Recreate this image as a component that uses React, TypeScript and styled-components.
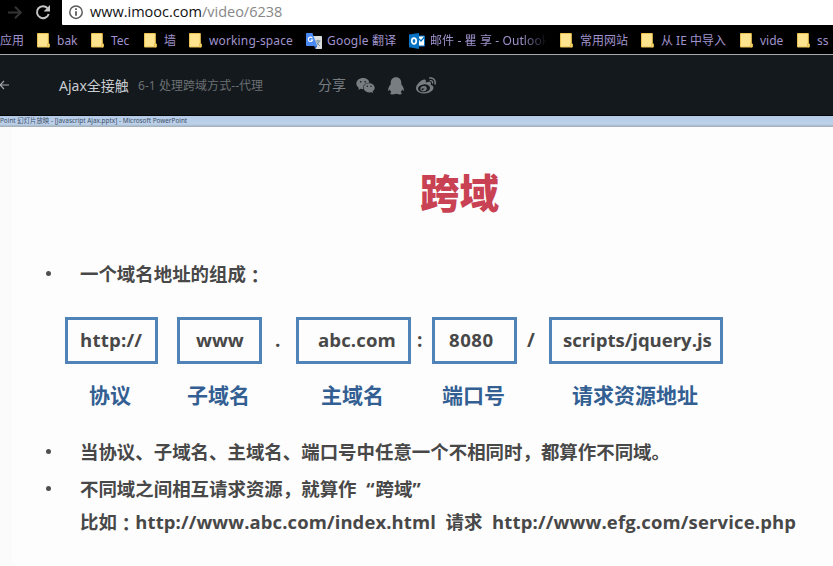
import React from 'react';
import styled, { createGlobalStyle } from 'styled-components';
import { AiFillWechat } from 'react-icons/ai';
import { FaWeibo } from 'react-icons/fa';

const Global = createGlobalStyle`
  * { box-sizing: border-box; }
  body { margin: 0; background: #000; overflow: hidden; }
`;

const Page = styled.div`
  width: 833px;
  height: 566px;
  overflow: hidden;
  display: flex;
  flex-direction: column;
  background: #000;
  font-family: 'Noto Sans', 'Noto Sans CJK SC', sans-serif;
  white-space: pre;
`;

const Toolbar = styled.div`
  height: 25px;
  flex: none;
  display: flex;
`;

const NavButtons = styled.div`
  width: 62px;
  display: flex;
  svg { display: block; }
`;

const AddressBar = styled.div`
  flex: 1;
  display: flex;
  background: #fff;
  padding-left: 6px;
  border-radius: 0 0 0 1px;
`;

const Url = styled.div`
  margin-left: 6px;
  font: 14.5px/24px 'Open Sans', sans-serif;
  color: #878787;
  span { color: #111; }
`;

const Bookmarks = styled.div`
  height: 29px;
  flex: none;
  display: grid;
  grid-template-columns: 37px 54px 53px 45px 117px 103px 151px 81px 99px 57px 60px;
  align-items: center;
  padding-top: 2px;
`;

const Bookmark = styled.div<{ $gap?: number; $spacing?: number; $fade?: boolean }>`
  display: flex;
  align-items: center;
  gap: ${(p) => p.$gap ?? 7}px;
  font-size: 12px;
  line-height: 18px;
  color: #a093cd;
  letter-spacing: ${(p) => p.$spacing ?? 0}px;
  overflow: hidden;
  svg { flex: none; }
  span {
    ${(p) => p.$fade && `
      width: 117px;
      overflow: hidden;
      mask-image: linear-gradient(90deg, #000 92px, transparent 117px);
    `}
  }
`;

const CourseBar = styled.div`
  height: 62px;
  flex: none;
  display: flex;
  align-items: center;
  background: #14191d;
  border-top: 1px solid #a8a8a8;
  border-bottom: 1px solid #040608;
  svg { flex: none; }
`;

const CourseTitle = styled.div`
  width: 79px;
  margin: -1px 0 0 49px;
  font-size: 14px;
  color: #c9cdd1;
`;

const Lesson = styled.div`
  width: 180px;
  font-size: 12px;
  letter-spacing: 0.05px;
  color: #6b7074;
`;

const Share = styled.div`
  display: flex;
  align-items: center;
  color: #787d82;
  font-size: 14px;
  span { width: 37px; margin-top: -2px; }
  svg + svg { margin: 1px 0 0 11px; }
`;

const WindowTitle = styled.div`
  height: 11px;
  flex: none;
  background: linear-gradient(#b4cae6, #bdd2ea 80%, #a9b9c8);
  border-bottom: 1px solid #a6b3bf;
  font-size: 6.4px;
  line-height: 9px;
  color: #3e4f68;
`;

const Slide = styled.main`
  flex: 1;
  border-left: 12px solid #fbfbfb;
  background: #fdfdfd;
  display: flex;
  flex-direction: column;
  color: #484848;
  font-family: 'Open Sans', 'Noto Sans CJK SC', sans-serif;
  font-weight: 700;
`;

const Heading = styled.h1`
  margin: 38px 0 0 408px;
  height: 56px;
  font-size: 39.5px;
  line-height: 56px;
  font-weight: 900;
  color: #c84253;
`;

const Point = styled.div<{ $top: number }>`
  margin: ${(p) => p.$top}px 0 0 34px;
  height: 28px;
  display: grid;
  grid-template-columns: 34px 1fr;
  font-size: 18.46px;
  line-height: 28px;
`;

const Dot = styled.i`
  width: 5px;
  height: 5px;
  margin-top: 11px;
  border-radius: 50%;
  background: #505050;
`;

const Colon = styled.span`
  font-family: 'Noto Sans CJK TC', sans-serif;
  display: inline-block;
  height: 28px;
  vertical-align: top;
  padding-top: 1px;
`;

const Latin = styled.span<{ $spacing: number }>`
  letter-spacing: ${(p) => p.$spacing}px;
`;

const OpenQuote = styled.span`
  display: inline-block;
  width: 19px;
  padding-right: 1px;
  text-align: right;
`;

const UrlParts = styled.div`
  margin: 29px 0 0 53px;
  display: grid;
  grid-template-columns: 93px 19px 85px 34px 115px 21px 85px 32px 174px;
  grid-template-rows: 47px 48px;
  font-size: 19px;
`;

const Part = styled.div<{ $indent: number; $spacing: number; $size?: number }>`
  border: 3px solid #5084b9;
  padding-left: ${(p) => p.$indent}px;
  font-size: ${(p) => p.$size ?? 18.6}px;
  line-height: 39px;
  letter-spacing: ${(p) => p.$spacing}px;
`;

const Separator = styled.div<{ $indent: number }>`
  padding-left: ${(p) => p.$indent}px;
  line-height: 47px;
`;

const PartName = styled.div<{ $indent: number }>`
  padding-left: ${(p) => p.$indent}px;
  font-size: 21px;
  line-height: 62px;
  color: #335f93;
`;

const Folder = () => (
  <svg width="13" height="15" viewBox="0 0 13 15">
    <path d="M.5 .5h10.8v10l1 .5v3H.5z" fill="#ffe48f" stroke="#e8c14e" />
    <path d="M10.5 14v-3.3h1.6V14z" fill="#ffe48f" stroke="#dfb646" strokeWidth=".7" />
  </svg>
);

const Translate = () => (
  <svg width="16" height="16" viewBox="0 0 16 16">
    <path d="M6 3h9.3q.7 0 .7.8v11.5q0 .7-.8.7H9.5z" fill="#d9dde0" />
    <path d="M9.5 8h5M12 6.7V8m1.4 0q-.7 2.6-3 4M10.7 9q1 2.4 3.2 3.8" fill="none" stroke="#607d8b" strokeWidth=".8" />
    <path d="M.8 0h5.6l4.8 13H.8Q0 13 0 12.2V.8Q0 0 .8 0z" fill="#4889f4" />
    <path d="M6.4 5.2A2.2 2.2 0 1 0 6.6 7H4.6" fill="none" stroke="#fff" strokeWidth="1.1" />
    <path d="M8 13h3.2L9.5 16z" fill="#3264bd" />
  </svg>
);

const Outlook = () => (
  <svg width="16" height="16" viewBox="0 0 16 16">
    <path d="M8 3h7.5v10H8z" fill="#fff" stroke="#0872c4" />
    <path d="m9.5 5.5 2.5 2.5 3.5-4" fill="none" stroke="#0872c4" strokeWidth="1.3" />
    <path d="m0 1.5 10-1.5v16L0 14.3z" fill="#0872c4" />
    <ellipse cx="5" cy="8" rx="2.2" ry="2.9" fill="none" stroke="#fff" strokeWidth="1.7" />
  </svg>
);

const Penguin = () => (
  <svg width="18" height="18" viewBox="0 0 18 18" fill="currentColor">
    <path d="M9 .3C5.4.3 3.7 2.8 3.7 5.8v1.5C2.1 9.2 1 11.4 1.1 13.2c0 .8.5.9.9.4l.9-1c.2 1 .8 1.9 1.5 2.6-1 .4-1.3.9-1.1 1.5.4 1 4.6.9 5.7-.2 1.1 1.1 5.3 1.2 5.7.2.2-.6-.1-1.1-1.1-1.5.7-.7 1.3-1.6 1.5-2.6l.9 1c.4.5.9.4.9-.4.1-1.8-1-4-2.6-5.9V5.8C14.3 2.8 12.6.3 9 .3z" />
  </svg>
);

const App = () => (
  <Page>
    <Global />
    <Toolbar>
      <NavButtons>
        <svg width="62" height="25" viewBox="0 0 62 25" fill="none">
          <path d="M8 12.5h12M15 6.8l5.8 5.7-5.8 5.7" stroke="#343434" strokeWidth="2" />
          <path d="M47.5 8.2A6 6 0 1 0 48.7 14" stroke="#c5c5c5" strokeWidth="2" />
          <path d="M50 5.1v6.4h-6.4z" fill="#c5c5c5" />
        </svg>
      </NavButtons>
      <AddressBar>
        <svg width="16" height="25" viewBox="0 0 16 25">
          <circle cx="8" cy="12.2" r="6.2" fill="none" stroke="#5a5a5a" strokeWidth="1.5" />
          <path d="M8 11.2v4.5M8 8.2v1.7" stroke="#5a5a5a" strokeWidth="1.8" />
        </svg>
        <Url><span>www.imooc.com</span>/video/6238</Url>
      </AddressBar>
    </Toolbar>
    <Bookmarks>
      <Bookmark>应用</Bookmark>
      <Bookmark><Folder /><span>bak</span></Bookmark>
      <Bookmark><Folder /><span>Tec</span></Bookmark>
      <Bookmark><Folder /><span>墙</span></Bookmark>
      <Bookmark $spacing={0.14}><Folder /><span>working-space</span></Bookmark>
      <Bookmark $gap={5} $spacing={0.2}><Translate /><span>Google 翻译</span></Bookmark>
      <Bookmark $gap={5} $spacing={0.1} $fade><Outlook /><span>邮件 - 瞿 享 - Outlook</span></Bookmark>
      <Bookmark><Folder /><span>常用网站</span></Bookmark>
      <Bookmark><Folder /><span>从 IE 中导入</span></Bookmark>
      <Bookmark><Folder /><span>vide</span></Bookmark>
      <Bookmark><Folder /><span>ss</span></Bookmark>
    </Bookmarks>
    <CourseBar>
      <svg width="10" height="12" viewBox="0 0 10 12" fill="none" stroke="#a5a9ac" strokeWidth="1.2">
        <path d="M9 6H0M4 2 0 6l4 4" />
      </svg>
      <CourseTitle>Ajax全接触</CourseTitle>
      <Lesson>6-1 处理跨域方式--代理</Lesson>
      <Share>
        <span>分享</span>
        <AiFillWechat size={21} />
        <Penguin />
        <FaWeibo size={20} />
      </Share>
    </CourseBar>
    <WindowTitle>Point 幻灯片放映 - [Javascript Ajax.pptx] - Microsoft PowerPoint</WindowTitle>
    <Slide>
      <Heading>跨域</Heading>
      <Point $top={39}>
        <Dot />
        <div>一个域名地址的组成<Colon>：</Colon></div>
      </Point>
      <UrlParts>
        <Part $indent={12} $spacing={0.2}>http://</Part>
        <span />
        <Part $indent={16} $spacing={0}>www</Part>
        <Separator $indent={13}>.</Separator>
        <Part $indent={19} $spacing={0.1}>abc.com</Part>
        <Separator $indent={6}>:</Separator>
        <Part $indent={14} $spacing={0.5}>8080</Part>
        <Separator $indent={10}>/</Separator>
        <Part $indent={11} $spacing={-0.05}>scripts/jquery.js</Part>
        <PartName $indent={24}>协议</PartName>
        <span />
        <PartName $indent={10}>子域名</PartName>
        <span />
        <PartName $indent={25}>主域名</PartName>
        <span />
        <PartName $indent={10}>端口号</PartName>
        <span />
        <PartName $indent={23}>请求资源地址</PartName>
      </UrlParts>
      <Point $top={26}>
        <Dot />
        <div>当协议、子域名、主域名、端口号中任意一个不相同时，都算作不同域。</div>
      </Point>
      <Point $top={9}>
        <Dot />
        <div>不同域之间相互请求资源，就算作<OpenQuote>“</OpenQuote>跨域”</div>
      </Point>
      <Point $top={5}>
        <span />
        <div>比如<Colon>：</Colon><Latin $spacing={0.12}>http://www.abc.com/index.html</Latin>  请求  <Latin $spacing={0.18}>http://www.efg.com/service.php</Latin></div>
      </Point>
    </Slide>
  </Page>
);

export default App;
